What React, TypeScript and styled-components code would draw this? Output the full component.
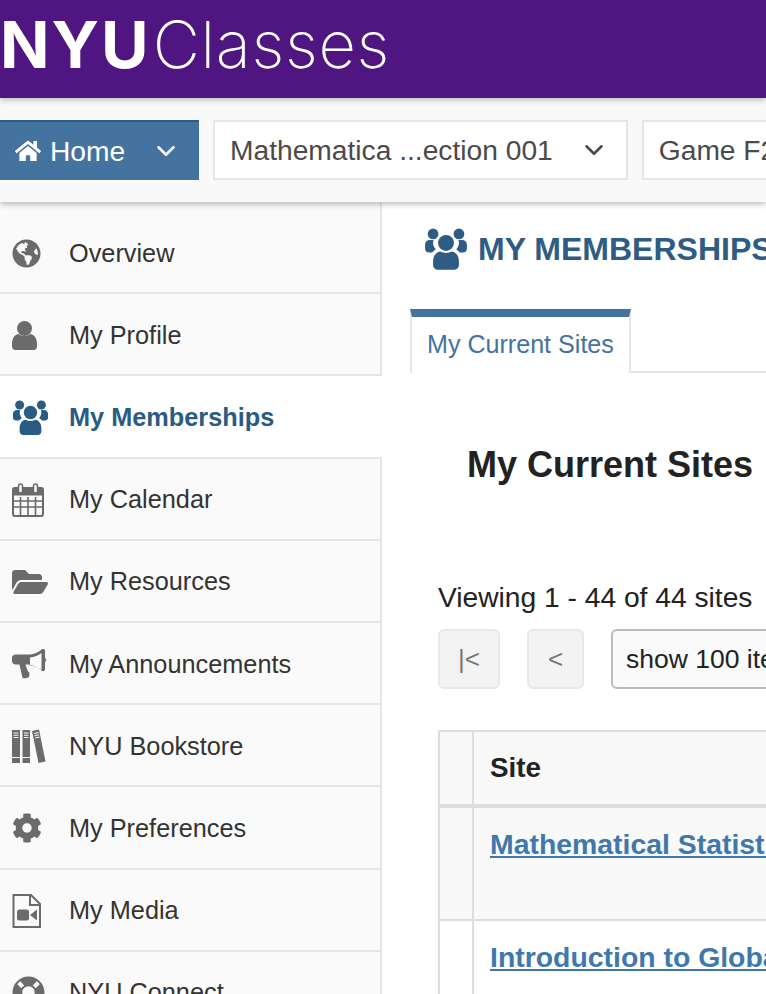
import React from 'react';
import styled, { createGlobalStyle } from 'styled-components';
import { ChevronDown } from 'lucide-react';
import { FaCog, FaFolderOpen, FaGlobeAmericas, FaHome, FaLifeRing } from 'react-icons/fa';

const GlobalStyle = createGlobalStyle`
  html, body {
    margin: 0;
    height: 100%;
    overflow: hidden;
    background: #fff;
    font-family: "Liberation Sans", Arial, sans-serif;
    color: #222;
  }
  * { box-sizing: border-box; }
`;

const UsersIcon = ({ size }: { size: number }) => (
  <svg width={size} height={size * 0.95} viewBox="0 0 44 42" fill="currentColor">
    <circle cx="9" cy="6" r="5.4" />
    <circle cx="35" cy="6" r="5.4" />
    <path d="M1 17c0-3 2-5 5-5h3.500a10 10 0 0 0 2.200 9.500c-1.500.8-2.600 1.800-3.400 3H5c-2.400 0-4-1.500-4-4z" />
    <path d="M43 17c0-3-2-5-5-5h-3.500a10 10 0 0 1-2.200 9.500c1.500.8 2.600 1.800 3.400 3H39c2.400 0 4-1.500 4-4z" />
    <circle cx="22" cy="15" r="8" />
    <path d="M9 34c0-6 3-10 7-10.500 2 1 4 1.500 6 1.500s4-.5 6-1.500c4 .5 7 4.500 7 10.500v3c0 3-2 5-5 5H14c-3 0-5-2-5-5z" />
  </svg>
);

const ProfileIcon = () => (
  <svg width="25" height="29" viewBox="0 0 25 29" fill="currentColor">
    <circle cx="12.500" cy="7.500" r="7.500" />
    <path d="M0 23c0-6 3-9.500 6.500-10 1.700 1.300 3.700 2 6 2s4.300-.7 6-2c3.500.5 6.500 4 6.500 10v2.500c0 2-1.500 3.500-3.500 3.500h-18C1.500 29 0 27.500 0 25.500z" />
  </svg>
);

const CalendarIcon = () => (
  <svg width="32" height="34" viewBox="0 0 32 34" fill="none" stroke="currentColor">
    <rect x="1" y="5" width="30" height="28" rx="2" strokeWidth="2" />
    <path d="M1 5h30v7H1z" fill="currentColor" strokeWidth="1" />
    <path d="M8.500 14v18M16 14v18M23.500 14v18M2 18h28M2 24h28" strokeWidth="1.600" />
    <rect x="6.500" y="1" width="4" height="9" rx="2" fill="#fafafa" strokeWidth="1.500" />
    <rect x="21.500" y="1" width="4" height="9" rx="2" fill="#fafafa" strokeWidth="1.500" />
  </svg>
);

const BullhornIcon = () => (
  <svg width="34" height="30" viewBox="0 0 34 30" fill="currentColor">
    <path
      fillRule="evenodd"
      d="M30 0h1.500c.8 0 1.500.7 1.500 1.500V9c.8.3 1.500 1 1.500 2s-.6 1.700-1.500 2v7.500c0 .8-.7 1.500-1.500 1.500H30c-4-4-9-6-14-6.500h-2.500l2 6 2 2.500-.5 4c-2 1.500-5 1.500-6.500 1l-3-13.500H4c-2.500 0-4-1.500-4-3.500V9c0-2 1.500-3.500 4-3.500h12C21 5.500 26 4 30 0zM29.500 4c-3.500 2.500-7 4-11.500 4.500v8c4.500.5 8 2 11.500 4.500z"
    />
  </svg>
);

const BooksIcon = () => (
  <svg width="34" height="34" viewBox="0 0 34 34" fill="currentColor">
    <path fillRule="evenodd" d="M0 1h8v33H0zM1.500 3.500v1h5v-1zm0 2.200v1h5v-1zm0 2.200v1h5v-1zM0 28h8v1H0z" />
    <path fillRule="evenodd" d="M10.500 1h7.500v33h-7.500zM12 3.500v1h4.500v-1zm0 2.200v1h4.500v-1zm0 2.200v1h4.500v-1zM10.500 28h7.500v1h-7.500z" />
    <path fillRule="evenodd" d="M20 2l7-1.500 6.500 32-7 1.500zM22 4l.2 1 4.500-1-.2-1zm.5 2.200l.2 1 4.500-1-.2-1zm.5 2.200l.2 1 4.500-1-.2-1z" />
  </svg>
);

const MediaIcon = () => (
  <svg width="29" height="34" viewBox="0 0 29 34" fill="none" stroke="currentColor" strokeWidth="2">
    <path d="M1.500 1h17.500l9 9v23H1.500z" />
    <path d="M18 1v10h10" />
    <rect x="5" y="15.500" width="12" height="11" rx="2.500" fill="currentColor" stroke="none" />
    <path d="M18 21l7-5.500v11z" fill="currentColor" stroke="none" />
  </svg>
);

const navItems = [
  { label: 'Overview', icon: <FaGlobeAmericas size={29} /> },
  { label: 'My Profile', icon: <ProfileIcon /> },
  { label: 'My Memberships', icon: <UsersIcon size={37} />, active: true },
  { label: 'My Calendar', icon: <CalendarIcon /> },
  { label: 'My Resources', icon: <FaFolderOpen size={36} /> },
  { label: 'My Announcements', icon: <BullhornIcon /> },
  { label: 'NYU Bookstore', icon: <BooksIcon /> },
  { label: 'My Preferences', icon: <FaCog size={30} /> },
  { label: 'My Media', icon: <MediaIcon /> },
  { label: 'NYU Connect', icon: <FaLifeRing size={33} /> },
];

const sites = ['Mathematical Statistics', 'Introduction to Global Game Design'];

export default function App() {
  return (
    <>
      <GlobalStyle />
      <Banner>
        <LogoBold>NYU</LogoBold>
        <LogoThin>Classes</LogoThin>
      </Banner>
      <SiteBar>
        <HomeTab>
          <FaHome size={26} />
          <TabLabel>Home</TabLabel>
          <ChevronDown size={30} strokeWidth={2} />
        </HomeTab>
        <SiteTab>
          <TabLabel>Mathematica ...ection 001</TabLabel>
          <ChevronDown size={30} strokeWidth={2} />
        </SiteTab>
        <SiteTab>
          <TabLabel>Game F21 Section 002</TabLabel>
          <ChevronDown size={30} strokeWidth={2} />
        </SiteTab>
      </SiteBar>
      <Body>
        <Sidebar>
          {navItems.map((item) => (
            <NavItem key={item.label} $active={item.active}>
              <NavIcon $active={item.active}>{item.icon}</NavIcon>
              {item.label}
            </NavItem>
          ))}
        </Sidebar>
        <Main>
          <PageTitle>
            <UsersIcon size={44} />
            <span>MY MEMBERSHIPS</span>
          </PageTitle>
          <Tabs>
            <Tab>My Current Sites</Tab>
          </Tabs>
          <Panel>
            <Heading>My Current Sites</Heading>
            <Viewing>Viewing 1 - 44 of 44 sites</Viewing>
            <Pager>
              <PageButton $width={62} disabled>
                |&lt;
              </PageButton>
              <PageButton $width={57} disabled>
                &lt;
              </PageButton>
              <PageSize defaultValue="100">
                <option value="100">show 100 items...</option>
              </PageSize>
            </Pager>
            <SitesTable>
              <thead>
                <tr>
                  <HeadCell />
                  <HeadCell>Site</HeadCell>
                </tr>
              </thead>
              <tbody>
                {sites.map((site, i) => (
                  <Row key={site} $striped={i % 2 === 0}>
                    <Cell />
                    <Cell>
                      <SiteLink href="#">{site}</SiteLink>
                    </Cell>
                  </Row>
                ))}
              </tbody>
            </SitesTable>
          </Panel>
        </Main>
      </Body>
    </>
  );
}

const Banner = styled.header`
  position: relative;
  z-index: 2;
  display: flex;
  align-items: center;
  height: 98px;
  padding: 0 0 10px 0;
  background: #4f1581;
  color: #fff;
  box-shadow: 0 2px 6px rgba(0, 0, 0, 0.25);
  font-family: Inter, "Liberation Sans", sans-serif;
  font-size: 65px;
  line-height: 1;
`;

const LogoBold = styled.span`
  font-weight: 700;
  letter-spacing: 2px;
`;

const LogoThin = styled.span`
  margin-left: 2px;
  font-weight: 200;
  letter-spacing: 0.7px;
`;

const SiteBar = styled.nav`
  position: relative;
  z-index: 1;
  display: flex;
  align-items: center;
  gap: 14px;
  height: 104px;
  background: #f9f9f9;
  box-shadow: 0 2px 6px rgba(0, 0, 0, 0.28);
  overflow: hidden;
  font-size: 28.200px;
`;

const TabLabel = styled.span`
  white-space: nowrap;
`;

const HomeTab = styled.div`
  display: flex;
  flex: 0 0 199px;
  align-items: center;
  height: 60px;
  padding-left: 15px;
  background: #44739f;
  border-top: 2px solid #2f5c84;
  color: #fff;

  ${TabLabel} {
    margin: 0 auto 0 9px;
  }
  svg:last-child {
    margin-right: 18px;
  }
`;

const SiteTab = styled.div`
  display: flex;
  flex: 0 0 auto;
  align-items: center;
  gap: 26px;
  height: 60px;
  padding: 0 17px 0 15px;
  background: #fff;
  border: 2px solid #e6e6e6;
  color: #4a4a4a;
`;

const Body = styled.div`
  display: flex;
  align-items: flex-start;
`;

const Sidebar = styled.aside`
  flex: 0 0 382px;
  height: 800px;
  padding-top: 10px;
  background: #fafafa;
  border-right: 2px solid #e6e6e6;
`;

const NavItem = styled.div<{ $active?: boolean }>`
  display: flex;
  align-items: center;
  height: 82.200px;
  margin-right: ${(p) => (p.$active ? '-2px' : '0')};
  padding-top: 2px;
  background: ${(p) => (p.$active ? '#fff' : 'transparent')};
  border-bottom: 2px solid #e6e6e6;
  color: ${(p) => (p.$active ? '#2a5b82' : '#333')};
  font-size: 25.300px;
  font-weight: ${(p) => (p.$active ? 700 : 400)};
`;

const NavIcon = styled.span<{ $active?: boolean }>`
  display: flex;
  flex: 0 0 69px;
  align-items: center;
  padding-left: 12px;
  color: ${(p) => (p.$active ? '#2a5b82' : '#6b6b6b')};
`;

const Main = styled.main`
  flex: 0 0 1000px;
  padding: 26px 0 0 28px;
`;

const PageTitle = styled.h1`
  display: flex;
  align-items: center;
  gap: 10px;
  height: 42px;
  margin: 0 0 39px 14px;
  color: #2f5c84;
  font-size: 32px;
  font-weight: 700;
  white-space: nowrap;
`;

const Tabs = styled.div`
  display: flex;
  border-bottom: 2px solid #e6e6e6;
`;

const Tab = styled.div`
  height: 64px;
  margin-bottom: -2px;
  padding: 13px 15px 0;
  background: #fff;
  border: 2px solid #e6e6e6;
  border-top: 8px solid #44739f;
  border-bottom: 0;
  color: #44739f;
  font-size: 25.100px;
`;

const Panel = styled.section`
  padding-left: 28px;
`;

const Heading = styled.h2`
  margin: 70px 0 0 29px;
  color: #222;
  font-size: 36px;
  font-weight: 700;
  line-height: 44px;
`;

const Viewing = styled.div`
  margin-top: 94px;
  color: #222;
  font-size: 28.200px;
  line-height: 32px;
`;

const Pager = styled.div`
  display: flex;
  gap: 27px;
  margin-top: 16px;
`;

const PageButton = styled.button<{ $width: number }>`
  width: ${(p) => p.$width}px;
  height: 60px;
  padding: 0;
  background: #f3f3f3;
  border: 2px solid #e8e8e8;
  border-radius: 6px;
  color: #777;
  font-family: inherit;
  font-size: 26px;
`;

const PageSize = styled.select`
  appearance: none;
  width: 320px;
  height: 60px;
  padding: 0 13px;
  background: #fafafa;
  border: 2px solid #bbb;
  border-radius: 6px;
  color: #222;
  font-family: inherit;
  font-size: 26.500px;
`;

const SitesTable = styled.table`
  width: 900px;
  margin-top: 41px;
  border-collapse: collapse;
  table-layout: fixed;
`;

const HeadCell = styled.th`
  height: 75px;
  padding: 0 16px;
  background: #f9f9f9;
  border: 2px solid #ddd;
  border-bottom-width: 4px;
  color: #222;
  font-size: 27.800px;
  text-align: left;

  &:first-child {
    width: 34px;
  }
`;

const Row = styled.tr<{ $striped: boolean }>`
  background: ${(p) => (p.$striped ? '#f9f9f9' : '#fff')};
`;

const Cell = styled.td`
  height: 114px;
  padding: 20px 16px 0;
  border: 2px solid #ddd;
  vertical-align: top;
`;

const SiteLink = styled.a`
  color: #3f78ac;
  font-size: 28.400px;
  font-weight: 700;
  text-decoration: underline;
`;
